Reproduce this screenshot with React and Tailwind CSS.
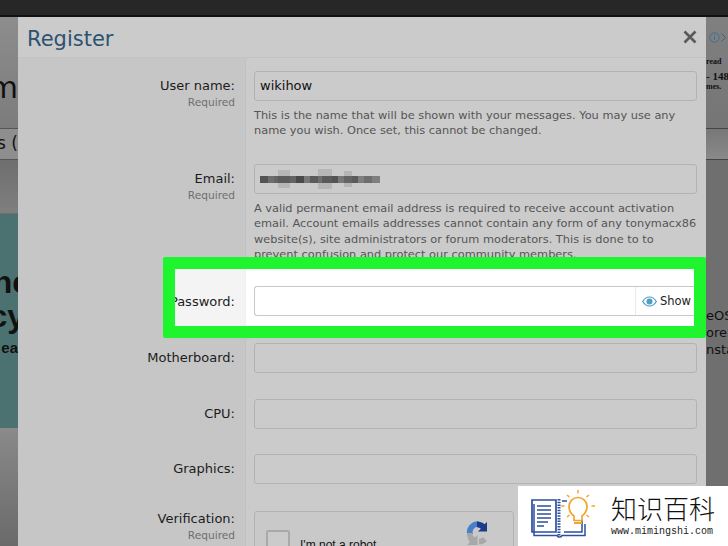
const FONT = "font-['DejaVu_Sans',sans-serif]";

function Label({ text, required }) {
  return (
    <div className="w-[227px] shrink-0 bg-[#c6c6c6] pr-[10px] text-right">
      <div className="text-[13px] leading-[16px] text-[#1c1c1c]">{text}</div>
      {required && <div className="text-[10.6px] leading-[16px] text-[#6f6f6f]">Required</div>}
    </div>
  );
}

function Input({ children }) {
  return (
    <div className="flex h-[30px] items-center rounded-[3px] border border-[#b2b2b2] bg-[#cbcbcb] px-[5px] text-[13px] text-[#111]">
      {children}
    </div>
  );
}

function Row({ label, required, top, height, children }) {
  return (
    <div className="flex" style={{ height }}>
      <div className="flex w-[227px] shrink-0 flex-col bg-[#c6c6c6]" style={{ paddingTop: top + 7 }}>
        <Label text={label} required={required} />
      </div>
      <div className="min-w-0 flex-1 border-l border-[#c0c0c0] pl-[8px] pr-[9px]" style={{ paddingTop: top }}>
        {children}
      </div>
    </div>
  );
}

function Help({ children }) {
  return <p className="mt-[7px] text-[11.35px] leading-[15.3px] text-[#555]">{children}</p>;
}

const BLOCKS = [
  [8, 0.55, 7], [6, 0.4, 7], [4, 0.45, 7], [12, 0.5, 18], [6, 0.45, 7], [8, 0.6, 7], [6, 0.35, 7], [8, 0.5, 7], [4, 0.4, 20], [10, 0.5, 20],
  [6, 0.55, 7], [6, 0.35, 7], [8, 0.45, 16], [6, 0.5, 7], [6, 0.3, 7], [8, 0.4, 7], [8, 0.3, 7],
];

function Mosaic() {
  return (
    <div className="flex items-center blur-[0.6px]">
      {BLOCKS.map(([w, o, h], i) => (
        <span key={i} className="flex items-center bg-black/10" style={{ width: w, height: h }}>
          <span className="block h-[7px] w-full bg-black" style={{ opacity: o }} />
        </span>
      ))}
    </div>
  );
}

function Eye() {
  return (
    <svg width="15" height="11" viewBox="0 0 15 11" className="shrink-0">
      <path d="M0.7 5.5C2.5 2.4 5 1 7.5 1s5 1.4 6.8 4.5C12.5 8.6 10 10 7.5 10S2.5 8.6.7 5.5Z" fill="none" stroke="#4f9cc4" strokeWidth="1.2" />
      <circle cx="7.5" cy="5.5" r="3" fill="#4f9cc4" />
    </svg>
  );
}

function Highlight() {
  return (
    <div className="absolute left-[145px] right-0 top-0 z-10 h-[81px] rounded-[2px] border-[12px] border-[#1ff52f] bg-white">
      <div className="flex h-full">
        <div className="flex w-[70px] shrink-0 items-center justify-end overflow-hidden whitespace-nowrap bg-[#f4f4f4] pr-[10px] pt-[8px] text-[13px] text-[#1c1c1c]">
          Password:
        </div>
        <div className="flex flex-1 items-center border-l border-[#f0f0f0] pl-[8px] pt-[7px]">
          <div className="flex h-[30px] flex-1 items-center rounded-l-[3px] border-y border-l border-[#c8c8c8] bg-white">
            <div className="flex-1" />
            <div className="flex h-full w-[59px] items-center gap-[3px] border-l border-[#ebebeb] pl-[6px] text-[11.5px] text-[#222]">
              <Eye />
              <span className="pt-[2px]">Show</span>
            </div>
          </div>
        </div>
      </div>
    </div>
  );
}

function LeftStrip() {
  return (
    <div className="flex w-[18px] shrink-0 flex-col overflow-hidden text-[#111]">
      <div className="flex h-[111px] items-center justify-end whitespace-nowrap bg-gradient-to-b from-[#8d8d8d] to-[#7c7c7c] text-[30px] leading-none">
        <span className="pt-[30px]">m</span>
      </div>
      <div className="flex h-[32px] items-center justify-end border-y border-[#555] bg-[#8e8e8e] text-[17px]">
        <span>s&nbsp;(</span>
      </div>
      <div className="h-[54px] border-b border-[#6f6f6f] bg-gradient-to-b from-[#6e6e6e] to-[#7f7f7f]" />
      <div className="flex h-[214px] flex-col items-end whitespace-nowrap bg-[#4b7270] pt-[53px] font-['Liberation_Sans',sans-serif] font-bold">
        <span className="-mr-[12px] text-[32px] leading-[31px]">ne</span>
        <span className="-mr-[7px] mt-[3px] text-[32px] leading-[31px]">cy</span>
        <span className="mt-[1px] text-[15px] leading-[30px]">ea</span>
      </div>
      <div className="flex-1 bg-gradient-to-b from-[#8a8a8a] to-[#6a6a6a]" />
    </div>
  );
}

function RightStrip() {
  return (
    <div className="flex flex-1 flex-col overflow-hidden whitespace-nowrap bg-[#757575] font-['Liberation_Serif',serif] text-[#111]">
      <div className="h-[111px] bg-gradient-to-b from-[#808080] to-[#757575]">
        <div className="flex h-[40px] items-center gap-[1px] pl-[3px]">
          <svg width="11" height="11" viewBox="0 0 11 11" className="shrink-0">
            <circle cx="5.5" cy="5.5" r="4.7" fill="none" stroke="#3f6f8f" />
            <path d="M5.5 4.5V8M5.5 2.6v1" stroke="#3f6f8f" />
          </svg>
          <svg width="5" height="9" viewBox="0 0 5 9"><path d="M.5.5l4 4-4 4" fill="none" stroke="#3f5f7f" /></svg>
        </div>
        <div className="text-[8px] font-bold leading-[10px]">read</div>
        <div className="mt-[3px] text-[11px] font-bold leading-[13px]">- 148</div>
        <div className="text-[8px] font-bold leading-[8px]">mes.</div>
      </div>
      <div className="h-[32px] border-y border-[#444] bg-gradient-to-b from-[#777] to-[#8a8a8a]" />
      <div className="flex-1 bg-[#6f6f6f] pt-[147px] font-['DejaVu_Sans',sans-serif] text-[13px] leading-[17px]">
        <div>eOS</div>
        <div>ore</div>
        <div>nsta</div>
      </div>
    </div>
  );
}

function Recaptcha() {
  return (
    <svg width="28" height="28" viewBox="0 0 28 28" className="-mt-[11px] shrink-0" fill="none">
      <path d="M6 16A8.500 8.500 0 0 1 14.500 5" stroke="#4a7fc8" strokeWidth="5.500" />
      <path d="M13 2.500c3 0 5.500 1 7.500 2.800L23 3v9.500h-9l2.800-2.800c-1-.800-2.200-1.300-3.800-1.400V2.500Z" fill="#1c3a8a" />
      <path d="M3 14h6l-1 0c.300 2 1.300 3.500 3 4.500L13.500 16v10H3l3-3C4 21 3 18 3 14Z" fill="#a8a8a8" />
      <path d="M15 19.500c1.500 0 3-.500 4-1.500l4 4c-2 2-5 3.500-8 3.500v-6Z" fill="#a8a8a8" />
    </svg>
  );
}

function Logo() {
  return (
    <div className="absolute bottom-0 right-0 z-20 flex h-[60px] w-[210px] items-start bg-white pl-[13px] pt-[4px]">
      <svg width="66" height="52" viewBox="0 0 66 52" className="shrink-0" fill="none">
        <path d="M1 10H25V42H1Z" stroke="#2d4f9e" strokeWidth="1.700" />
        <path d="M3 14V45.500H26Q27 47 28 47H29Q30 47 31 45.500H54V34" stroke="#2d4f9e" strokeWidth="1.500" />
        <path d="M6 16H20M6 20H20M6 24H20M6 28H20M6 32H17M6 36H13" stroke="#2d4f9e" strokeWidth="1.700" />
        <path d="M28 9V46" stroke="#2d4f9e" strokeWidth="3" strokeDasharray="1.500 1.200" />
        <path d="M31 11H36M33 42H51V30" stroke="#2d4f9e" strokeWidth="1.500" />
        <path d="M43 26C39.500 23.500 38 20 38 16.500a9 9 0 0 1 18 0C56 20 54.500 23.500 51 26v4.500h-8V26Z" stroke="#f3a42e" strokeWidth="1.700" />
        <path d="M43 33h8" stroke="#f3a42e" strokeWidth="2" />
        <path d="M47 0v3.500M36 5l2.500 2M58 5l-2.500 2M30 16h3.500M60.500 16H64M36 27l2.500-2M58 27l-2.500-2" stroke="#f3a42e" strokeWidth="1.500" />
      </svg>
      <div className="ml-[14px] flex flex-col pt-[5px]">
        <span className="font-['Noto_Sans_CJK_SC',sans-serif] text-[26px] font-light leading-[26px] text-[#111]">知识百科</span>
        <span className="mt-[4px] font-['Liberation_Mono',monospace] text-[10px] leading-[14px] text-[#222]">www.mimingshi.com</span>
      </div>
    </div>
  );
}

export default function App() {
  return (
    <div className={`relative flex h-[546px] w-[728px] flex-col overflow-hidden bg-[#757575] ${FONT}`}>
      <div className="h-[17px] shrink-0 border-b-2 border-[#111] bg-[#272727]" />
      <div className="flex min-h-0 flex-1">
        <LeftStrip />
        <div className="flex w-[688px] shrink-0 flex-col bg-[#cbcbcb]">
          <div className="flex h-[41px] shrink-0 items-center justify-between border-b border-[#c3c3c3] px-[9px] pt-[5px]">
            <span className="text-[21px] text-[#2c5270]">Register</span>
            <svg width="14" height="14" viewBox="0 0 14 14" className="-mt-[5px]">
              <path d="M1.500 1.500l11 11M12.500 1.500l-11 11" stroke="#5a5a5a" strokeWidth="2.600" />
            </svg>
          </div>
          <Row label="User name:" required top={13} height={106}>
            <Input>wikihow</Input>
            <Help>This is the name that will be shown with your messages. You may use any name you wish. Once set, this cannot be changed.</Help>
          </Row>
          <Row label="Email:" required top={0} height={93}>
            <Input><Mosaic /></Input>
            <Help>A valid permanent email address is required to receive account activation email. Account emails addresses cannot contain any form of any tonymacx86 website(s), site administrators or forum moderators. This is done to to prevent confusion and protect our community members.</Help>
          </Row>
          <div className="relative h-[86px] shrink-0">
            <div className="flex h-full">
              <div className="w-[227px] bg-[#c6c6c6]" />
              <div className="flex-1 border-l border-[#c0c0c0]" />
            </div>
            <Highlight />
          </div>
          <Row label="Motherboard:" top={0} height={56}><Input /></Row>
          <Row label="CPU:" top={0} height={55}><Input /></Row>
          <Row label="Graphics:" top={0} height={57}><Input /></Row>
          <div className="flex min-h-0 flex-1 overflow-hidden">
            <div className="w-[227px] shrink-0 bg-[#c6c6c6]">
              <Label text="Verification:" required />
            </div>
            <div className="flex-1 border-l border-[#c0c0c0] pl-[8px]">
              <div className="flex h-[60px] w-[260px] items-start rounded-[3px] border border-[#b2b2b2] bg-[#c9c9c9] pl-[11px] pr-[21px] pt-[18px]">
                <div className="h-[24px] w-[24px] shrink-0 rounded-[2px] border-2 border-[#a9a9a9] bg-[#cbcbcb]" />
                <span className="ml-[10px] flex-1 pt-[6px] font-['Liberation_Sans',sans-serif] text-[12px] text-[#111]">I'm not a robot</span>
                <Recaptcha />
              </div>
            </div>
          </div>
        </div>
        <RightStrip />
      </div>
      <Logo />
    </div>
  );
}
